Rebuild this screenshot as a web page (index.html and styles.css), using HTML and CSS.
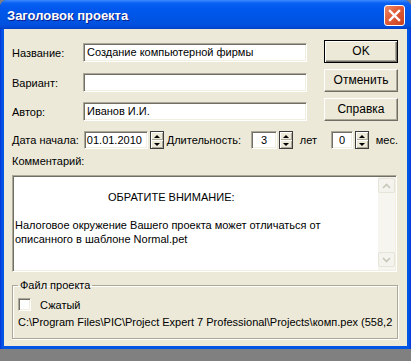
FILE: index.html
```html
<!DOCTYPE html>
<html lang="ru">
<head>
    <meta charset="UTF-8">
    <title>Заголовок проекта</title>
    <link rel="stylesheet" href="styles.css">
</head>
<body>

<div class="window">
    <div class="titlebar">
        <span class="title">Заголовок проекта</span>
        <div class="close">
            <svg width="13" height="13" viewBox="0 0 13 13">
                <path d="M2 2 L11 11 M11 2 L2 11" stroke="#fff" stroke-width="2.4" stroke-linecap="square"/>
            </svg>
        </div>
    </div>

    <div class="body">
        <div class="top">
            <div class="fields">
                <div class="field first">
                    <span class="label">Название:</span>
                    <div class="input wide">Создание компьютерной фирмы</div>
                </div>
                <div class="field second">
                    <span class="label">Вариант:</span>
                    <div class="input wide"></div>
                </div>
                <div class="field">
                    <span class="label">Автор:</span>
                    <div class="input wide">Иванов И.И.</div>
                </div>
            </div>
            <div class="buttons">
                <div class="btn default">OK</div>
                <div class="btn">Отменить</div>
                <div class="btn">Справка</div>
            </div>
        </div>

        <div class="daterow">
            <span class="lbl-date">Дата начала:</span>
            <div class="input date">01.01.2010</div>
            <div class="spin"><span class="up"></span><span class="down"></span></div>
            <span class="lbl-dur">Длительность:</span>
            <div class="input num years">3</div>
            <div class="spin"><span class="up"></span><span class="down"></span></div>
            <span class="lbl-unit">лет</span>
            <div class="input num months">0</div>
            <div class="spin"><span class="up"></span><span class="down"></span></div>
            <span class="lbl-mes">мес.</span>
        </div>

        <div class="comment-label">Комментарий:</div>
        <div class="memo">
            <div class="memo-text">
                <div class="notice">ОБРАТИТЕ ВНИМАНИЕ:</div>
                <div class="para">Налоговое окружение Вашего проекта может отличаться от<br>описанного в шаблоне Normal.pet</div>
            </div>
            <div class="scrollbar">
                <div class="sbtn"><svg width="9" height="6" viewBox="0 0 9 6"><path d="M1 5 L4.5 1.5 L8 5" fill="none" stroke="#c9c7ba" stroke-width="1.6"/></svg></div>
                <div class="sbtn"><svg width="9" height="6" viewBox="0 0 9 6"><path d="M1 1 L4.5 4.5 L8 1" fill="none" stroke="#c9c7ba" stroke-width="1.6"/></svg></div>
            </div>
        </div>

        <fieldset class="group">
            <legend>Файл проекта</legend>
            <div class="check-row">
                <span class="checkbox"></span>
                <span class="check-text">Сжатый</span>
            </div>
            <div class="path">C:\Program Files\PIC\Project Expert 7 Professional\Projects\комп.pex (558,2</div>
        </fieldset>
    </div>
</div>

</body>
</html>
```

FILE: styles.css
```css
body {
    margin: 0;
    background: #808080;
    font-family: "Liberation Sans", Arial, sans-serif;
    font-size: 11px;
    color: #000;
}
.window {
    width: 411px;
    height: 349px;
    background: linear-gradient(to right, #0831d9 0px, #0055e5 2px, #0055e5 409px, #0831d9 411px);
    border-radius: 7px 7px 0 0;
    display: flex;
    flex-direction: column;
    overflow: hidden;
}
.titlebar {
    height: 29px;
    flex: none;
    display: flex;
    align-items: center;
    justify-content: space-between;
    padding: 0 6px 0 7px;
    box-sizing: border-box;
    background: linear-gradient(#3d8bff 0px, #0a62f3 3px, #0058ee 8px, #0055e5 18px, #0050dd 25px, #0046d4 28px, #003cb8 29px);
}
.title {
    color: #fff;
    font-weight: bold;
    font-size: 13px;
    text-shadow: 1px 1px #0a1d8a;
    margin-top: 1px;
}
.close {
    width: 21px;
    height: 21px;
    box-sizing: border-box;
    border: 1px solid #fff;
    border-radius: 3px;
    background: linear-gradient(135deg, #ed8c6c 0%, #e2603b 40%, #c8401e 100%);
    display: flex;
    align-items: center;
    justify-content: center;
    margin-top: 1px;
}
.body {
    flex: 1;
    margin: 0 4px 3px 4px;
    background: #ece9d8;
    padding: 11px 9px 0 8px;
}
.top {
    display: flex;
    align-items: flex-start;
}
.fields {
    width: 295px;
    padding-top: 3px;
}
.field {
    display: flex;
    align-items: center;
    height: 19px;
    margin-bottom: 10px;
}
.field.first {
    margin-bottom: 11px;
}
.field:last-child {
    margin-bottom: 0;
}
.label {
    width: 71px;
}
.input {
    box-sizing: border-box;
    background: #fff;
    border: 1px solid;
    border-color: #aca899 #fff #fff #aca899;
    box-shadow: inset 1px 1px #716f64, inset -1px -1px #f1efe2;
    padding: 0 3px;
    white-space: nowrap;
    overflow: hidden;
}
.input.wide {
    width: 224px;
    height: 19px;
    line-height: 17px;
}
.buttons {
    margin-left: 17px;
    width: 74px;
    display: flex;
    flex-direction: column;
    gap: 6px;
}
.btn {
    height: 23px;
    box-sizing: border-box;
    border: 1px solid;
    border-color: #fff #716f64 #716f64 #fff;
    box-shadow: inset -1px -1px #aca899;
    text-align: center;
    line-height: 21px;
    font-size: 12px;
}
.btn.default {
    border-color: #000;
    box-shadow: inset 1px 1px #fff, inset -1px -1px #716f64, inset -2px -2px #aca899;
}
.daterow {
    display: flex;
    align-items: center;
    height: 18px;
    margin-top: 10px;
}
.lbl-date {
    width: 73px;
}
.input.date,
.input.num {
    height: 18px;
    line-height: 16px;
}
.input.date {
    width: 65px;
    padding: 0 2px;
}
.input.num {
    text-align: center;
    padding: 0;
}
.input.years {
    width: 26px;
}
.input.months {
    width: 22px;
}
.spin {
    margin-left: 2px;
    width: 14px;
    height: 18px;
    box-sizing: border-box;
    border: 1px solid #3c3c3c;
    background: #ece9d8;
    display: flex;
    flex-direction: column;
}
.spin span {
    flex: 1;
    display: flex;
    align-items: center;
    justify-content: center;
    box-shadow: inset 1px 1px #fff, inset -1px -1px #aca899;
}
.spin .up::before {
    content: "";
    border-left: 3px solid transparent;
    border-right: 3px solid transparent;
    border-bottom: 3px solid #000;
}
.spin .down::before {
    content: "";
    border-left: 3px solid transparent;
    border-right: 3px solid transparent;
    border-top: 3px solid #000;
}
.lbl-dur {
    margin-left: 3px;
    width: 86px;
}
.lbl-unit {
    margin-left: 7px;
    width: 32px;
}
.lbl-mes {
    margin-left: 7px;
}
.comment-label {
    margin-top: 6px;
    line-height: 13px;
}
.memo {
    margin-top: 7px;
    width: 385px;
    height: 97px;
    box-sizing: border-box;
    background: #fff;
    border: 1px solid;
    border-color: #aca899 #fff #fff #aca899;
    box-shadow: inset 1px 1px #716f64, inset -1px -1px #f1efe2;
    display: flex;
    padding: 1px;
}
.memo-text {
    flex: 1;
    padding: 13px 0 0 1px;
    line-height: 14px;
}
.notice {
    padding-left: 93px;
    margin-bottom: 14px;
}
.scrollbar {
    width: 17px;
    background: #f6f5ef;
    display: flex;
    flex-direction: column;
    justify-content: space-between;
    padding: 1px 0 3px 0;
}
.sbtn {
    height: 15px;
    box-sizing: border-box;
    border: 1px solid #e6e4d8;
    border-radius: 2px;
    background: #f4f3ee;
    display: flex;
    align-items: center;
    justify-content: center;
}
.group {
    margin: 7px 0 0 0;
    width: 385px;
    box-sizing: border-box;
    border: 1px solid #aca899;
    box-shadow: inset 1px 1px #fff, 1px 1px #fff;
    padding: 0 5px 9px 5px;
}
.group legend {
    padding: 0 2px;
    line-height: 13px;
}
.check-row {
    display: flex;
    align-items: center;
    margin-top: 6px;
}
.checkbox {
    width: 13px;
    height: 13px;
    box-sizing: border-box;
    background: #fff;
    border: 1px solid;
    border-color: #aca899 #fff #fff #aca899;
    box-shadow: inset 1px 1px #716f64, inset -1px -1px #f1efe2;
}
.check-text {
    margin-left: 9px;
}
.path {
    margin-top: 5px;
    line-height: 13px;
    white-space: nowrap;
}
```
